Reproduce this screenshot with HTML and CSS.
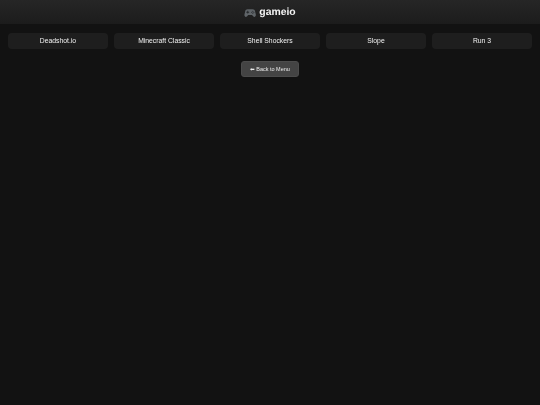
FILE: index.html
```html
<!DOCTYPE html>
<html lang="en">
<head>
  <meta charset="UTF-8">
  <meta name="viewport" content="width=device-width, initial-scale=1.0">
  <title>gameio</title>
  <link rel="stylesheet" href="styles.css">
</head>

<body>

  <div class="page">

    <!-- Header -->
    <header class="site-header">
      <svg class="logo-icon" viewBox="0 0 24 18" aria-hidden="true">
        <path d="M6.5 1.5h11c2.4 0 3.9 1.4 4.6 3.8l1.5 6.9c.5 2.6-.9 4.6-2.9 4.6-1.5 0-2.5-.9-3.4-2.1l-1.1-1.5H8.3l-1.1 1.5c-.9 1.2-1.9 2.1-3.4 2.1-2 0-3.4-2-2.9-4.6l1.5-6.9c.7-2.4 2.2-3.8 4.6-3.8z" fill="#5f6468"/>
        <path d="M6.6 4.6h1.8v1.9h1.9v1.8H8.4v1.9H6.6V8.3H4.7V6.5h1.9z" fill="#25282b"/>
        <circle cx="17.6" cy="5.4" r="1.1" fill="#25282b"/>
        <circle cx="15.4" cy="7.4" r="1.1" fill="#25282b"/>
        <circle cx="19.7" cy="7.4" r="1.1" fill="#25282b"/>
        <circle cx="17.6" cy="9.4" r="1.1" fill="#25282b"/>
      </svg>
      <span class="logo-text">gameio</span>
    </header>

    <!-- Game list -->
    <div class="game-grid">
      <button class="game-btn">Deadshot.io</button>
      <button class="game-btn">Minecraft Classic</button>
      <button class="game-btn">Shell Shockers</button>
      <button class="game-btn">Slope</button>
      <button class="game-btn">Run 3</button>
    </div>

    <div class="back-row">
      <button class="back-btn"><span class="back-arrow">⬅</span> Back to Menu</button>
    </div>

  </div>

</body>

</html>
```

FILE: styles.css
```css
/* Global Styles */
body {
  font-family: "Liberation Sans", Arial, sans-serif;
  margin: 0;
  padding: 0;
  background-color: #121212;
  color: #fff;
  height: 100vh;
  overflow: hidden;
}

/* own layer, keeps the text grayscale antialiased */
.page {
  will-change: transform;
  text-rendering: geometricPrecision;
}

/* Header */
.site-header {
  display: flex;
  justify-content: center;
  align-items: center;
  gap: 3px;
  box-sizing: border-box;
  height: 24px;
  padding-top: 1px;
  background: linear-gradient(to bottom, #262626, #1c1c1c);
}

.logo-icon {
  width: 12px;
  height: 10px;
}

.logo-text {
  font-size: 10.4px;
  font-weight: bold;
  color: #f4f4f4;
}

/* Game list */
.game-grid {
  display: grid;
  grid-template-columns: repeat(5, 1fr);
  gap: 6px;
  padding: 9px 8px 0;
}

.game-btn {
  height: 16px;
  padding: 0 0 1px;
  font-family: inherit;
  font-size: 6.8px;
  color: #f2f2f2;
  background-color: #1e1e1e;
  border: none;
  border-radius: 4px;
  cursor: pointer;
}

.back-row {
  display: flex;
  justify-content: center;
  margin-top: 12px;
}

.back-btn {
  width: 58px;
  height: 16px;
  padding: 0;
  font-family: inherit;
  font-size: 5.5px;
  color: #ececec;
  background-color: #444;
  border: 1px solid #4c4c4c;
  border-radius: 3px;
  cursor: pointer;
}

.back-arrow {
  font-family: "DejaVu Sans", sans-serif;
}
```
